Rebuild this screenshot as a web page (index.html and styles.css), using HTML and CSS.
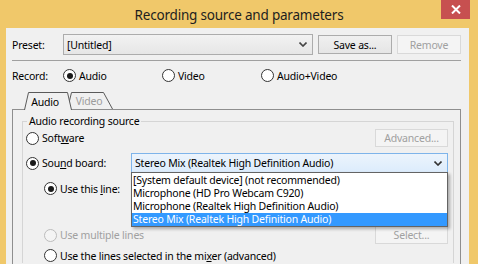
FILE: index.html
```html
<!DOCTYPE html>
<html lang="en">
<head>
    <meta charset="UTF-8">
    <title>Recording source and parameters</title>
    <link rel="stylesheet" href="styles.css">
</head>
<body>
    <div class="window">
        <!-- Заголовок окна -->
        <div class="titlebar">
            <span class="title">Recording source and parameters</span>
            <div class="close-btn">
                <svg width="10" height="9" viewBox="0 0 10 9">
                    <path d="M1 0.5 L9 8.5 M9 0.5 L1 8.5" stroke="#fff" stroke-width="2"/>
                </svg>
            </div>
        </div>

        <div class="client">
            <!-- Пресет -->
            <div class="preset-row">
                <span class="label">Preset:</span>
                <div class="combo preset-combo">
                    <span>[Untitled]</span>
                    <svg class="chevron" width="8" height="5" viewBox="0 0 8 5">
                        <path d="M0.5 0.5 L4 4 L7.5 0.5" fill="none" stroke="#444" stroke-width="1.6"/>
                    </svg>
                </div>
                <div class="btn save-btn">Save as...</div>
                <div class="btn btn-disabled remove-btn">Remove</div>
            </div>

            <div class="separator"></div>

            <!-- Что записывать -->
            <div class="record-row">
                <span class="label">Record:</span>
                <div class="radio-item record-opt"><span class="radio checked"></span><span>Audio</span></div>
                <div class="radio-item record-opt"><span class="radio"></span><span>Video</span></div>
                <div class="radio-item record-opt"><span class="radio"></span><span>Audio+Video</span></div>
            </div>

            <!-- Вкладки -->
            <div class="tabs">
                <div class="tab tab-active">
                    <svg class="tab-shape" width="48" height="18" viewBox="0 0 48 18">
                        <path d="M0.5 18 L4.5 0.5 L43.5 0.5 L47.5 18" fill="#F0F0F0" stroke="#5A5A5A"/>
                    </svg>
                    <span class="tab-text">Audio</span>
                </div>
                <div class="tab tab-video">
                    <svg class="tab-shape" width="46" height="17" viewBox="0 0 46 17">
                        <path d="M0.5 17 L4.5 0.5 L36.5 0.5 L45.5 17" fill="#F0F0F0" stroke="#5A5A5A"/>
                    </svg>
                    <span class="tab-text">Video</span>
                </div>
            </div>

            <div class="panel">
                <fieldset class="group">
                    <legend>Audio recording source</legend>

                    <div class="group-row row-software">
                        <div class="radio-item"><span class="radio"></span><span>Soft<u>w</u>are</span></div>
                        <div class="btn btn-disabled wide-btn">Advanced...</div>
                    </div>

                    <div class="group-row row-board">
                        <div class="radio-item board-opt"><span class="radio checked"></span><span>Sou<u>n</u>d board:</span></div>
                        <div class="combo board-combo">
                            <span>Stereo Mix (Realtek High Definition Audio)</span>
                            <svg class="chevron" width="8" height="5" viewBox="0 0 8 5">
                                <path d="M0.5 0.5 L4 4 L7.5 0.5" fill="none" stroke="#333" stroke-width="1.6"/>
                            </svg>
                            <!-- Раскрытый список -->
                            <div class="dropdown">
                                <div class="dropdown-item">[System default device] (not recommended)</div>
                                <div class="dropdown-item">Microphone (HD Pro Webcam C920)</div>
                                <div class="dropdown-item">Microphone (Realtek High Definition Audio)</div>
                                <div class="dropdown-item selected">Stereo Mix (Realtek High Definition Audio)</div>
                            </div>
                        </div>
                    </div>

                    <div class="group-row sub-row row-line">
                        <div class="radio-item"><span class="radio checked"></span><span>Use this <u>l</u>ine:</span></div>
                    </div>

                    <div class="group-row sub-row row-multi">
                        <div class="radio-item radio-disabled"><span class="radio"></span><span>Use multiple lines</span></div>
                        <div class="btn btn-disabled wide-btn">Select...</div>
                    </div>

                    <div class="group-row sub-row row-mixer">
                        <div class="radio-item"><span class="radio"></span><span>Use the lines selected in the mi<u>x</u>er (advanced)</span></div>
                    </div>
                </fieldset>
            </div>
        </div>
    </div>
</body>
</html>
```

FILE: styles.css
```css
/* Общие стили */
body {
    margin: 0;
    width: 478px;
    height: 264px;
    overflow: hidden;
    background-color: #F0C86A;
    font-family: 'Noto Sans', 'Open Sans', sans-serif;
    font-size: 10.5px;
    letter-spacing: -0.2px;
    color: #000;
}

.window {
    display: flex;
    flex-direction: column;
    height: 100%;
    overflow: hidden;
}

/* Заголовок */
.titlebar {
    height: 28px;
    flex-shrink: 0;
    display: grid;
    grid-template-columns: 1fr auto 1fr;
}

.title {
    grid-column: 2;
    align-self: center;
    font-size: 13.5px;
    letter-spacing: -0.2px;
    color: #1E1E1E;
    padding-top: 1px;
}

.close-btn {
    grid-column: 3;
    justify-self: end;
    width: 29px;
    height: 19px;
    margin-right: 8px;
    background-color: #C75050;
    display: flex;
    justify-content: center;
    align-items: center;
}

/* Клиентская область */
.client {
    flex: 1;
    min-height: 0;
    margin: 0 9px 0 6px;
    padding: 6px 8px 0 6px;
    background-color: #F0F0F0;
    display: flex;
    flex-direction: column;
}

.label {
    width: 51px;
    flex-shrink: 0;
}

.preset-row {
    display: flex;
    align-items: center;
    height: 21px;
}

.combo {
    position: relative;
    box-sizing: border-box;
    display: flex;
    align-items: center;
    justify-content: space-between;
    border: 1px solid #ACACAC;
    background: linear-gradient(#F2F2F2, #E6E6E6);
    padding: 0 5px 0 3px;
}

.preset-combo {
    width: 250px;
    height: 21px;
}

.btn {
    box-sizing: border-box;
    height: 19px;
    display: flex;
    justify-content: center;
    align-items: center;
    border: 1px solid #ACACAC;
    background: linear-gradient(#F0F0F0, #E5E5E5);
}

.btn-disabled {
    border-color: #D9D9D9;
    background: #F4F4F4;
    color: #A0A0A0;
}

.save-btn {
    width: 74px;
    margin-left: 5px;
}

.remove-btn {
    width: 64px;
    margin-left: 5px;
}

.separator {
    height: 1px;
    margin-top: 5px;
    background-color: #A0A0A0;
}

.record-row {
    display: flex;
    align-items: center;
    height: 15px;
    margin-top: 7px;
}

.record-opt {
    width: 99px;
}

/* Радиокнопки */
.radio-item {
    display: flex;
    align-items: center;
    gap: 3px;
    white-space: nowrap;
}

.radio {
    box-sizing: border-box;
    width: 13px;
    height: 13px;
    border: 1px solid #333;
    border-radius: 50%;
    background: #FFF;
    display: flex;
    justify-content: center;
    align-items: center;
    flex-shrink: 0;
}

.radio.checked::after {
    content: "";
    width: 6px;
    height: 6px;
    border-radius: 50%;
    background-color: #1A1A1A;
}

.radio-disabled {
    color: #A0A0A0;
}

.radio-disabled .radio {
    border-color: #BCBCBC;
    background: #F4F4F4;
}

/* Вкладки */
.tabs {
    position: relative;
    z-index: 2;
    display: flex;
    align-items: flex-end;
    height: 17px;
    flex-shrink: 0;
    margin-top: 9px;
    padding-left: 12px;
}

.tab {
    position: relative;
    display: flex;
    justify-content: center;
    align-items: center;
}

.tab-shape {
    position: absolute;
    left: 0;
    bottom: 0;
}

.tab-text {
    position: relative;
    padding-top: 1px;
}

.tab-active {
    width: 48px;
    height: 18px;
    margin-bottom: -1px;
    z-index: 2;
}

.tab-active .tab-text {
    padding-right: 6px;
}

.tab-video {
    width: 46px;
    height: 17px;
    margin-left: -5px;
    z-index: 1;
    color: #9C9C9C;
}

.tab-video .tab-text {
    padding-right: 2px;
}

.panel {
    flex: 1;
    min-height: 0;
    border: 1px solid #8E8E8E;
    border-bottom: none;
    padding-top: 3px;
}

/* Группа */
.group {
    margin: 0 6px 0 9px;
    padding: 0 5px 0 3px;
    border: 1px solid #D5D5D5;
    border-bottom: none;
}

.group legend {
    margin-left: 1px;
    padding: 0 2px;
    line-height: 16px;
}

.group-row {
    display: flex;
    align-items: center;
    justify-content: space-between;
}

.row-software {
    height: 18px;
}

.wide-btn {
    width: 73px;
    height: 18px;
}

.row-board {
    height: 20px;
    margin-top: 6px;
}

.board-opt {
    width: 105px;
}

.board-combo {
    width: 317px;
    height: 20px;
    border-color: #7EB4EA;
    background: linear-gradient(#ECF4FC, #DCECFC);
}

.sub-row {
    padding-left: 18px;
}

.row-line {
    height: 15px;
    margin-top: 8px;
}

.row-multi {
    height: 18px;
    margin-top: 30px;
}

.row-mixer {
    height: 15px;
    margin-top: 4px;
}

/* Выпадающий список */
.dropdown {
    position: absolute;
    top: 100%;
    left: -1px;
    width: 317px;
    box-sizing: border-box;
    padding-top: 1px;
    border: 1px solid #646464;
    background-color: #FFF;
    box-shadow: 2px 2px 3px rgba(0, 0, 0, 0.3);
    z-index: 5;
}

.dropdown-item {
    height: 13px;
    line-height: 13px;
    padding-left: 1px;
    white-space: nowrap;
}

.dropdown-item.selected {
    background-color: #3399FF;
    color: #FFF;
}
```
